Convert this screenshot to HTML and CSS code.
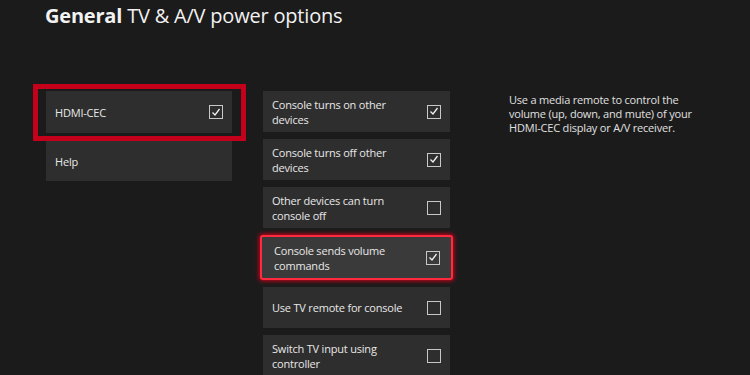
FILE: index.html
```html
<!DOCTYPE html>
<html lang="en">
<head>
    <meta charset="UTF-8">
    <meta name="viewport" content="width=device-width, initial-scale=1.0">
    <title>TV &amp; A/V power options</title>
    <link rel="stylesheet" href="styles.css">
</head>
<body>

<h1 class="title"><b>General</b> TV &amp; A/V power options</h1>

<div class="settings">
    <div class="nav">
        <div class="nav-focus">
            <div class="tile">
                <span>HDMI-CEC</span>
                <span class="box checked"><svg viewBox="0 0 14 14"><polyline points="3.5,7.5 6,10 10.5,4"/></svg></span>
            </div>
        </div>
        <div class="tile nav-help"><span>Help</span></div>
    </div>

    <div class="options">
        <div class="tile option">
            <span>Console turns on other devices</span>
            <span class="box checked"><svg viewBox="0 0 14 14"><polyline points="3.5,7.5 6,10 10.5,4"/></svg></span>
        </div>
        <div class="tile option">
            <span>Console turns off other devices</span>
            <span class="box checked"><svg viewBox="0 0 14 14"><polyline points="3.5,7.5 6,10 10.5,4"/></svg></span>
        </div>
        <div class="tile option">
            <span>Other devices can turn console off</span>
            <span class="box"></span>
        </div>
        <div class="tile option focused">
            <span>Console sends volume commands</span>
            <span class="box checked"><svg viewBox="0 0 14 14"><polyline points="3.5,7.5 6,10 10.5,4"/></svg></span>
        </div>
        <div class="tile option">
            <span>Use TV remote for console</span>
            <span class="box"></span>
        </div>
        <div class="tile option">
            <span>Switch TV input using controller</span>
            <span class="box"></span>
        </div>
    </div>

    <p class="description">Use a media remote to control the volume (up, down, and mute) of your HDMI-CEC display or A/V receiver.</p>
</div>

</body>
</html>
```

FILE: styles.css
```css
body {
    margin: 0;
    height: 375px;
    overflow: hidden;
    background-color: #1b1b1b;
    color: #e8e8e8;
    font-family: "Open Sans", "Noto Sans", sans-serif;
}

.title {
    margin: 0;
    padding: 2px 0 0 45px;
    font-size: 20px;
    font-weight: 400;
    line-height: 28px;
    color: #f2f2f2;
    letter-spacing: -0.2px;
}

.title b {
    font-weight: 700;
}

.settings {
    display: flex;
    align-items: flex-start;
    padding: 54px 0 0 33px;
}

.nav {
    width: 213px;
}

.nav-focus {
    border: 5px solid #c4001b;
    padding: 2px 9px 3px 8px;
}

.tile {
    display: flex;
    align-items: center;
    justify-content: space-between;
    box-sizing: border-box;
    background-color: #2e2e2e;
    font-size: 11px;
    line-height: 15px;
    letter-spacing: -0.2px;
    padding: 0 9px 0 9px;
}

.nav-focus .tile {
    height: 42px;
}

.nav-help {
    height: 40px;
    margin: 0 14px 0 13px;
}

.options {
    width: 187px;
    margin: 7px 0 0 17px;
    display: flex;
    flex-direction: column;
    gap: 7px;
}

.option {
    height: 41px;
}

.option span:first-child {
    max-width: 140px;
}

.option.focused {
    height: 45px;
    margin: 0 -3px;
    padding: 0 11px 0 12px;
    background-color: #3a3a3a;
    border: 2px solid #ff2a3d;
    border-radius: 3px;
    box-shadow: 0 0 4px 1px #d0001a;
}

.box {
    flex: none;
    width: 14px;
    height: 14px;
    box-sizing: border-box;
    border: 1.5px solid #c8c8c8;
}

.box svg {
    display: block;
    width: 100%;
    height: 100%;
    margin: 0;
    fill: none;
    stroke: #f0f0f0;
    stroke-width: 1.3;
}

.checked svg {
    width: 14px;
    height: 14px;
    margin: -1.5px;
}

.description {
    width: 186px;
    margin: 9px 0 0 59px;
    font-size: 11px;
    line-height: 14px;
    letter-spacing: -0.2px;
    color: #e0e0e0;
}
```
